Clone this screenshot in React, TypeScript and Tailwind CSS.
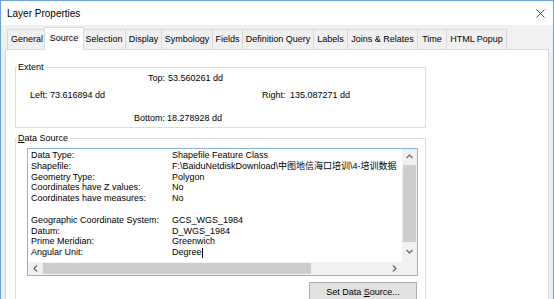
import React from "react";

const tabs = [
  { label: "General", w: "w-[39px]" },
  { label: "Source", w: "w-[40px]", active: true },
  { label: "Selection", w: "w-[43px]" },
  { label: "Display", w: "w-[36px]" },
  { label: "Symbology", w: "w-[51px]" },
  { label: "Fields", w: "w-[30px]" },
  { label: "Definition Query", w: "w-[71px]" },
  { label: "Labels", w: "w-[34px]" },
  { label: "Joins & Relates", w: "w-[70px]" },
  { label: "Time", w: "w-[29px]" },
  { label: "HTML Popup", w: "w-[61px]", last: true },
];

const rows = [
  ["Data Type:", "Shapefile Feature Class"],
  ["Shapefile:", "F:\\BaiduNetdiskDownload\\中图地信海口培训\\4-培训数据"],
  ["Geometry Type:", "Polygon"],
  ["Coordinates have Z values:", "No"],
  ["Coordinates have measures:", "No"],
  ["", ""],
  ["Geographic Coordinate System:", "GCS_WGS_1984"],
  ["Datum:", "D_WGS_1984"],
  ["Prime Meridian:", "Greenwich"],
  ["Angular Unit:", "Degree"],
];

function Chevron({ dir }: { dir: "up" | "down" | "left" | "right" }) {
  const pts = {
    up: "0.5,4 3.5,1 6.5,4",
    down: "0.5,1 3.5,4 6.5,1",
    left: "4,0.5 1,3.5 4,6.5",
    right: "1,0.5 4,3.5 1,6.5",
  }[dir];
  const vertical = dir === "up" || dir === "down";
  return (
    <svg
      width={vertical ? 7 : 5}
      height={vertical ? 5 : 7}
      viewBox={vertical ? "0 0 7 5" : "0 0 5 7"}
      aria-hidden="true"
    >
      <polyline points={pts} fill="none" stroke="#606060" strokeWidth="1.1" />
    </svg>
  );
}

export default function App() {
  return (
    <div className="w-[554px] h-[299px] overflow-hidden flex flex-col bg-[#f0f0f0] border-x border-t border-[#6fa3d8] text-black font-['Liberation_Sans','Noto_Sans_CJK_SC',sans-serif]">
      {/* Title bar */}
      <div className="h-[24px] shrink-0 bg-white flex items-center justify-between pl-[6px] pr-[8px]">
        <span className="text-[10px]">Layer Properties</span>
        <svg width="9" height="9" viewBox="0 0 9 9" aria-hidden="true">
          <path d="M0.5 0.5 L8.5 8.5 M8.5 0.5 L0.5 8.5" stroke="#333" strokeWidth="0.9" />
        </svg>
      </div>

      <div className="flex-1 flex flex-col px-[4px] pt-[2px]">
        {/* Tabs */}
        <div className="h-[22px] shrink-0 flex items-end pl-[2px] text-[9px]">
          {tabs.map((t) =>
            t.active ? (
              <div
                key={t.label}
                className={`${t.w} relative z-10 -mx-[2px] -mb-px h-[23px] bg-white border border-b-0 border-[#d9d9d9] flex items-center justify-center`}
              >
                {t.label}
              </div>
            ) : (
              <div
                key={t.label}
                className={`${t.w} h-[20px] bg-[#f0f0f0] border-l border-t border-[#d9d9d9] flex items-center justify-center whitespace-nowrap ${t.last ? "border-r" : ""}`}
              >
                {t.label}
              </div>
            )
          )}
        </div>

        {/* Panel */}
        <div className="flex-1 bg-white border border-[#d9d9d9] text-[9px]">
          <fieldset className="min-w-0 ml-[9px] mt-[12px] w-[411px] border border-[#dcdcdc] pb-[3px]">
            <legend className="px-[2px] leading-[11px]">Extent</legend>
            <div className="flex h-[11px] items-center pl-[132px]">
              <span className="w-[20px]">Top:</span>
              <span>53.560261 dd</span>
            </div>
            <div className="flex h-[11px] items-center mt-[6px] pl-[14px]">
              <span className="w-[232px]">Left: 73.616894 dd</span>
              <span className="w-[28px]">Right:</span>
              <span>135.087271 dd</span>
            </div>
            <div className="flex h-[11px] items-center mt-[12px] pl-[118px]">
              <span className="w-[33px]">Bottom:</span>
              <span>18.278928 dd</span>
            </div>
          </fieldset>

          <fieldset className="min-w-0 ml-[9px] mt-[5px] w-[411px] h-[200px] border border-[#dcdcdc]">
            <legend className="px-[2px] leading-[11px]">
              <span className="underline">D</span>ata Source
            </legend>

            <div className="ml-[11px] mt-[4px] w-[391px] h-[128px] border border-[#88b4e0] grid grid-cols-[1fr_15px] grid-rows-[1fr_13px]">
              <div className="overflow-hidden whitespace-nowrap pl-[3px] pt-[1px]">
                {rows.map(([k, v], i) => (
                  <div key={i} className="grid grid-cols-[141px_1fr] h-[10.8px] leading-[10.8px]">
                    <span>{k}</span>
                    <span className="flex items-center">
                      {v}
                      {v === "Degree" && <span className="inline-block w-px h-[10px] bg-black" />}
                    </span>
                  </div>
                ))}
              </div>

              <div className="bg-[#f0f0f0] flex flex-col">
                <div className="h-[15px] flex items-center justify-center">
                  <Chevron dir="up" />
                </div>
                <div className="mt-[1px] mx-[1px] h-[77px] bg-[#cdcdcd]" />
                <div className="mt-[2px] h-[15px] flex items-center justify-center">
                  <Chevron dir="down" />
                </div>
              </div>

              <div className="bg-[#f0f0f0] flex">
                <div className="w-[15px] flex items-center justify-center">
                  <Chevron dir="left" />
                </div>
                <div className="w-[268px] my-[1px] bg-[#cdcdcd]" />
                <div className="flex-1" />
                <div className="w-[15px] flex items-center justify-center">
                  <Chevron dir="right" />
                </div>
              </div>

              <div className="bg-[#f0f0f0]" />
            </div>

            <button className="block ml-[293px] mt-[6px] w-[108px] h-[20px] border border-[#adadad] bg-[#e1e1e1] text-[9px] leading-none">
              Set Data <span className="underline">S</span>ource...
            </button>
          </fieldset>
        </div>
      </div>
    </div>
  );
}
